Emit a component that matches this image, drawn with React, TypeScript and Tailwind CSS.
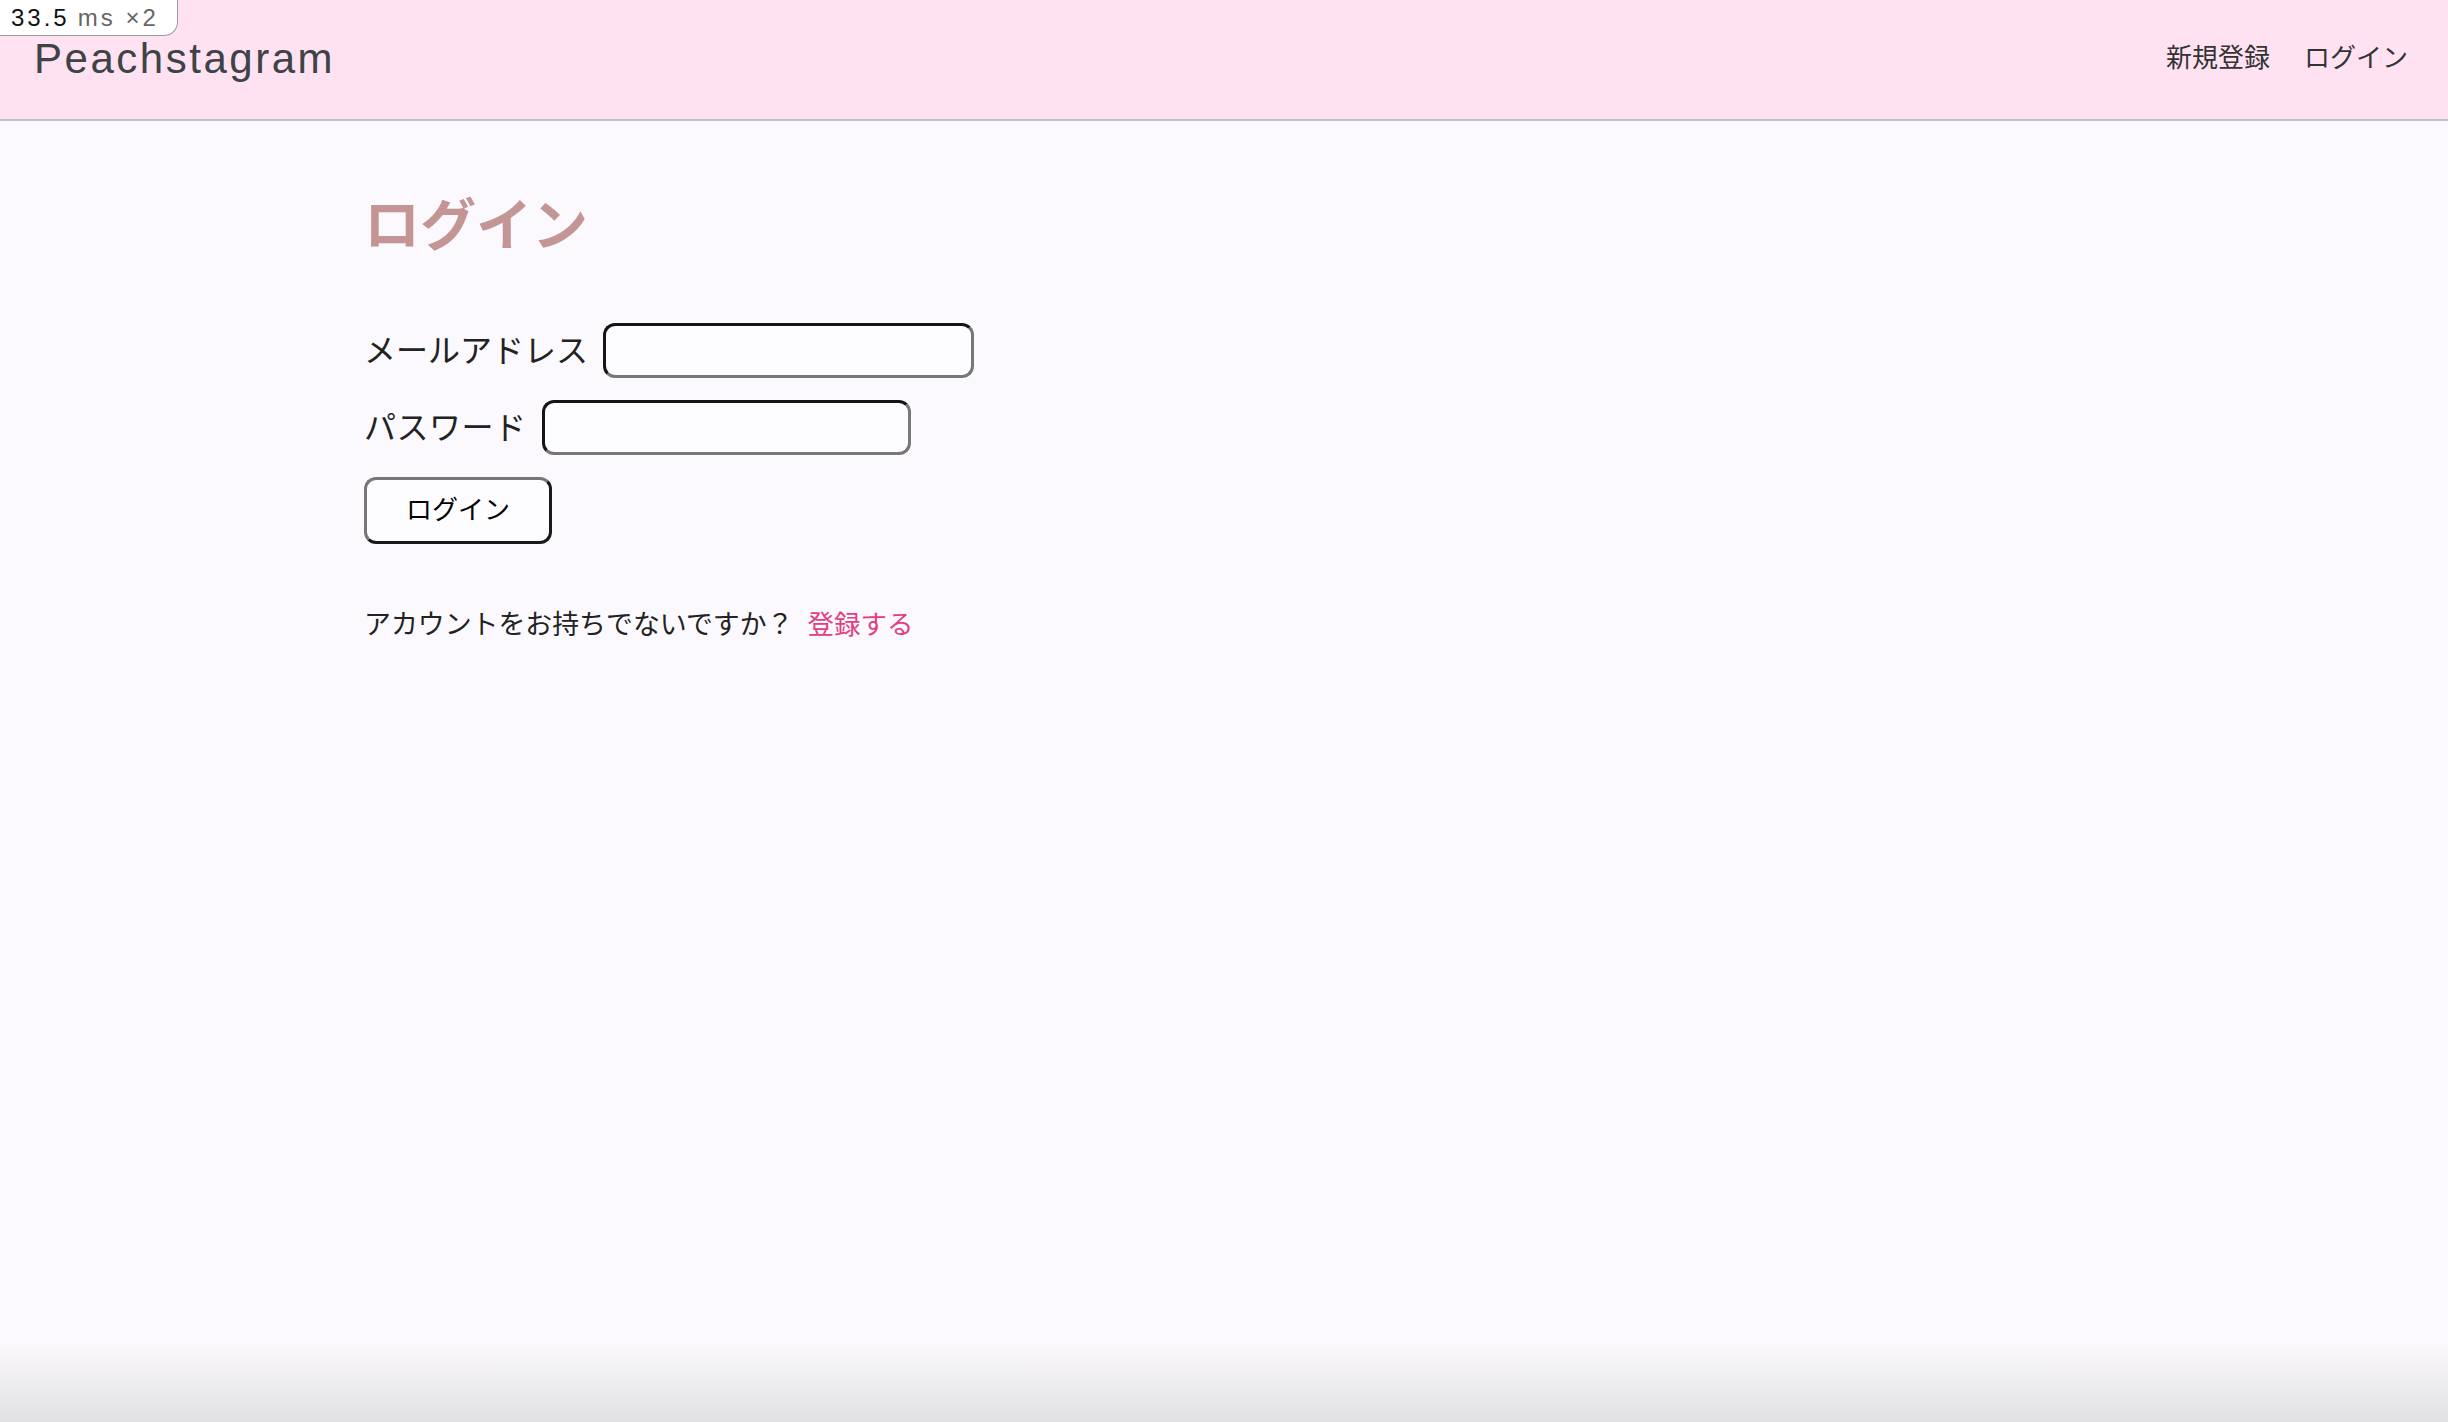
import React, { useState } from 'react';

export default function App() {
  const [email, setEmail] = useState('');
  const [password, setPassword] = useState('');

  return (
    <div className="relative min-h-screen bg-[#fbf9fd] font-['Liberation_Sans','Noto_Sans_CJK_JP',sans-serif] text-[#222]">
      {/* Header */}
      <header className="flex h-[121px] items-center justify-between border-b-2 border-[#c2c0c2] bg-[#ffe2f2] pl-[34px] pr-[40px]">
        <a href="#" className="pb-[2px] text-[42px] tracking-[0.06em] text-[#3e4346]">
          Peachstagram
        </a>
        <nav className="flex items-center gap-[34px] pb-[2px] text-[26px] text-[#333]">
          <a href="#">新規登録</a>
          <a href="#">ログイン</a>
        </nav>
      </header>

      {/* Login form */}
      <main className="pl-[364px] pt-[77px]">
        <h1 className="text-[56px] font-bold leading-none text-[#c39595]">ログイン</h1>

        <form className="mt-[69px] flex flex-col items-start gap-[22px]" onSubmit={(e) => e.preventDefault()}>
          <div className="flex items-center">
            <label className="text-[32px]">メールアドレス</label>
            <input
              type="email"
              value={email}
              onChange={(e) => setEmail(e.target.value)}
              className="ml-[15px] h-[55px] w-[371px] rounded-[12px] border-[3px] border-t-[#151515] border-l-[#151515] border-r-[#777] border-b-[#777] bg-[#fdfcff] px-3 text-[26px] outline-none"
            />
          </div>
          <div className="flex items-center">
            <label className="text-[32px] tracking-[0.5px]">パスワード</label>
            <input
              type="password"
              value={password}
              onChange={(e) => setPassword(e.target.value)}
              className="ml-[15px] h-[55px] w-[369px] rounded-[12px] border-[3px] border-t-[#151515] border-l-[#151515] border-r-[#777] border-b-[#777] bg-[#fdfcff] px-3 text-[26px] outline-none"
            />
          </div>
          <button
            type="submit"
            className="h-[67px] w-[188px] rounded-[12px] border-[3px] border-t-[#777] border-l-[#777] border-r-[#1a1a1a] border-b-[#1a1a1a] bg-[#fdfcff] text-[26px] text-black"
          >
            ログイン
          </button>
        </form>

        <p className="mt-[61px] text-[26.9px] text-[#222]">
          アカウントをお持ちでないですか？
          <a href="#" className="ml-[14px] text-[26.5px] text-[#e33e80]">登録する</a>
        </p>
      </main>

      {/* timing badge */}
      <div className="absolute left-0 top-0 flex h-[36px] w-[178px] items-center rounded-br-[14px] border-b border-r border-[#9a9a9a] bg-white pl-[11px] text-[24px] leading-none tracking-[3px]">
        <span className="text-[#111]">33.5</span>
        <span className="ml-[8px] text-[#666]">ms ×2</span>
      </div>

      {/* window bottom shade */}
      <div className="pointer-events-none fixed bottom-0 left-0 right-0 h-[80px] bg-gradient-to-b from-transparent to-[#e0dfe2]" />
    </div>
  );
}
